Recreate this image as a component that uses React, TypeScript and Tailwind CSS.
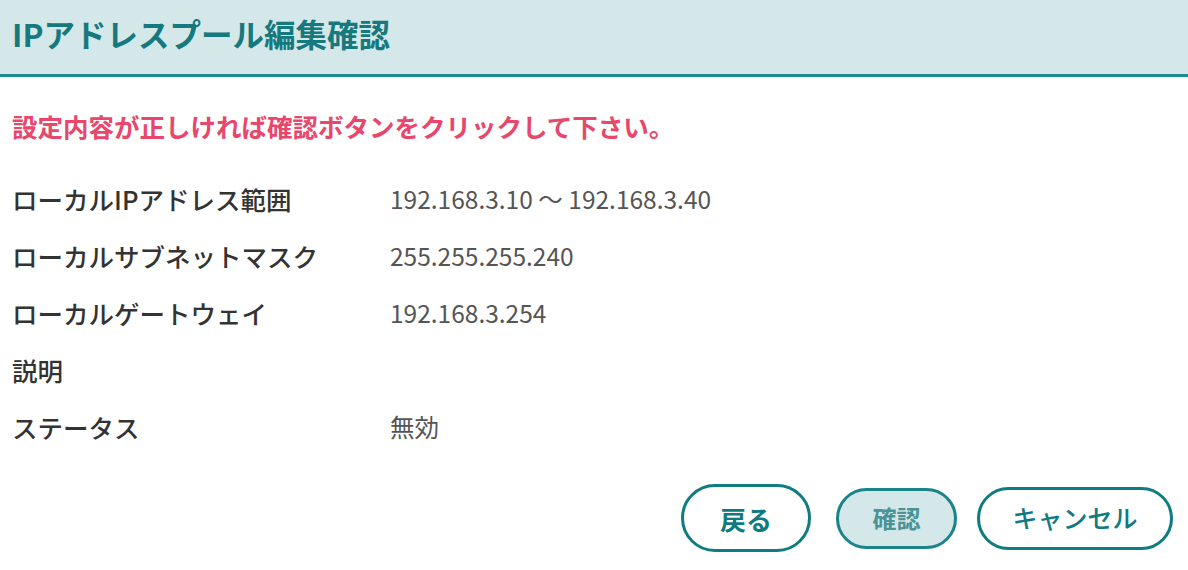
const rows: { label: string; value: string }[] = [
  { label: "ローカルIPアドレス範囲", value: "192.168.3.10 ～ 192.168.3.40" },
  { label: "ローカルサブネットマスク", value: "255.255.255.240" },
  { label: "ローカルゲートウェイ", value: "192.168.3.254" },
  { label: "説明", value: "" },
  { label: "ステータス", value: "無効" },
];

export default function App() {
  return (
    <div
      className="h-[570px] w-[1188px] overflow-hidden bg-white"
      style={{ fontFamily: '"Noto Sans CJK JP", "Noto Sans", sans-serif' }}
    >
      <header className="flex h-[77px] items-center border-b-[3px] border-[#1d8b91] bg-[#d4e7e9] px-[12px] pb-[6px]">
        <h1 className="text-[31.5px] font-bold text-[#16797e]">
          IPアドレスプール編集確認
        </h1>
      </header>

      <main className="px-[12px]">
        <p className="mt-[30px] text-[25.5px] leading-[37px] font-bold text-[#e9466c]">
          設定内容が正しければ確認ボタンをクリックして下さい。
        </p>

        <dl className="mt-[27px]">
          {rows.map((row) => (
            <div key={row.label} className="flex h-[57px] items-center">
              <dt className="w-[378px] text-[25.5px] font-medium text-[#333333]">
                {row.label}
              </dt>
              <dd className="text-[24.5px] text-[#555555]">{row.value}</dd>
            </div>
          ))}
        </dl>
      </main>

      <div className="mt-[28px] flex items-center justify-end pr-[15px]">
        <button className="flex h-[68px] w-[130px] items-center justify-center rounded-full border-[3px] border-[#0e7c80] bg-white text-[26px] font-bold text-[#0f7a7f]">
          戻る
        </button>
        <button className="ml-[25px] flex h-[61px] w-[121px] items-center justify-center rounded-full border-[3px] border-[#1a8489] bg-[#d4e7e9] text-[24px] font-bold text-[#4a9498]">
          確認
        </button>
        <button className="ml-[20px] flex h-[63px] w-[196px] items-center justify-center rounded-full border-[3px] border-[#0e7c80] bg-white text-[25px] font-medium text-[#0f7a7f]">
          キャンセル
        </button>
      </div>
    </div>
  );
}
